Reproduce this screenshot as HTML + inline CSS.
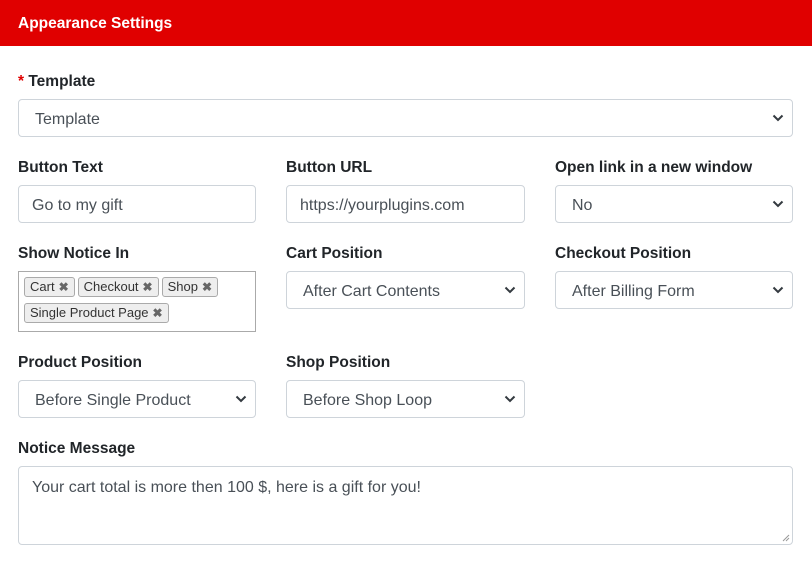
<!DOCTYPE html>
<html><head><style>
*{box-sizing:border-box;margin:0;padding:0}
body{width:812px;height:579px;background:#fff;font-family:"Liberation Sans",sans-serif;color:#212529;position:relative;overflow:hidden}
.hdr{position:absolute;left:0;top:0;width:812px;height:46px;background:#e00000;color:#fff;font-weight:bold;font-size:15.5px;padding:15px 0 0 18px}
.lbl{position:absolute;font-weight:bold;font-size:15.5px;color:#212529}
.lbl .r{color:#e00000}
.in{position:absolute;height:38px;border:1px solid #ced4da;border-radius:4px;font-size:16px;color:#495057;padding:11px 0 0 13px;background:#fff}
.sel{padding-left:16px}
.sel svg{position:absolute;right:8px;top:14px}
.tags{position:absolute;left:18px;top:271px;width:238px;height:61px;border:1px solid #aaa;padding:5px 0 0 5px}
.tag{display:inline-block;border:1px solid #aaa;border-radius:3px;background:#eee;font-size:13px;color:#333;padding:1px 5px;margin:0 3px 6px 0;height:20px;line-height:16px}
.tag b{color:#666;margin-left:4px;font-size:12px}
</style></head><body>
<div class="hdr">Appearance Settings</div>
<div class="lbl" style="left:18px;top:73px"><span class="r">*</span> Template</div>
<div class="in sel" style="left:18px;top:99px;width:775px">Template<svg width="12" height="8" viewBox="0 0 12 8"><path d="M1.5 1.5 6 6l4.5-4.5" fill="none" stroke="#343a40" stroke-width="2"/></svg></div>

<div class="lbl" style="left:18px;top:159px">Button Text</div>
<div class="lbl" style="left:286px;top:159px">Button URL</div>
<div class="lbl" style="left:555px;top:159px">Open link in a new window</div>
<div class="in" style="left:18px;top:185px;width:238px">Go to my gift</div>
<div class="in" style="left:286px;top:185px;width:239px">https://yourplugins.com</div>
<div class="in sel" style="left:555px;top:185px;width:238px">No<svg width="12" height="8" viewBox="0 0 12 8"><path d="M1.5 1.5 6 6l4.5-4.5" fill="none" stroke="#343a40" stroke-width="2"/></svg></div>

<div class="lbl" style="left:18px;top:245px">Show Notice In</div>
<div class="lbl" style="left:286px;top:245px">Cart Position</div>
<div class="lbl" style="left:555px;top:245px">Checkout Position</div>
<div class="tags"><span class="tag">Cart<b>✖</b></span><span class="tag">Checkout<b>✖</b></span><span class="tag">Shop<b>✖</b></span><span class="tag">Single Product Page<b>✖</b></span></div>
<div class="in sel" style="left:286px;top:271px;width:239px">After Cart Contents<svg width="12" height="8" viewBox="0 0 12 8"><path d="M1.5 1.5 6 6l4.5-4.5" fill="none" stroke="#343a40" stroke-width="2"/></svg></div>
<div class="in sel" style="left:555px;top:271px;width:238px">After Billing Form<svg width="12" height="8" viewBox="0 0 12 8"><path d="M1.5 1.5 6 6l4.5-4.5" fill="none" stroke="#343a40" stroke-width="2"/></svg></div>

<div class="lbl" style="left:18px;top:354px">Product Position</div>
<div class="lbl" style="left:286px;top:354px">Shop Position</div>
<div class="in sel" style="left:18px;top:380px;width:238px">Before Single Product<svg width="12" height="8" viewBox="0 0 12 8"><path d="M1.5 1.5 6 6l4.5-4.5" fill="none" stroke="#343a40" stroke-width="2"/></svg></div>
<div class="in sel" style="left:286px;top:380px;width:239px">Before Shop Loop<svg width="12" height="8" viewBox="0 0 12 8"><path d="M1.5 1.5 6 6l4.5-4.5" fill="none" stroke="#343a40" stroke-width="2"/></svg></div>

<div class="lbl" style="left:18px;top:440px">Notice Message</div>
<div class="in" style="left:18px;top:466px;width:775px;height:79px;padding-top:12px">Your cart total is more then 100 $, here is a gift for you!<svg style="position:absolute;right:2px;bottom:2px" width="8" height="8" viewBox="0 0 8 8"><path d="M7 1 1 7M7 4 4 7" stroke="#999" stroke-width="1"/></svg></div>
</body></html>
